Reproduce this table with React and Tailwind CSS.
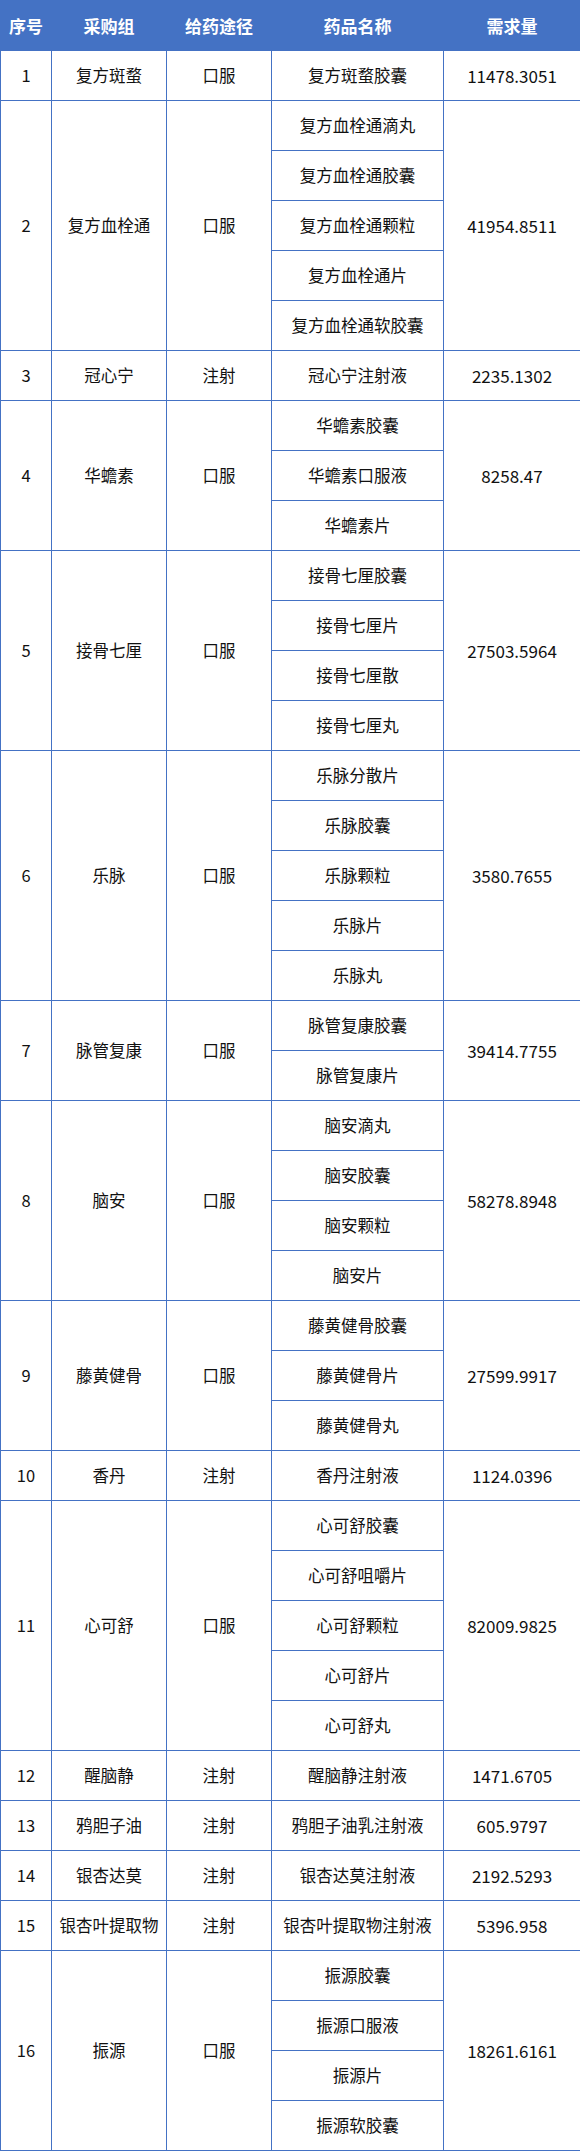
import React from "react";

const rows = [
  { no: 1, group: "复方斑蝥", route: "口服", items: ["复方斑蝥胶囊"], qty: "11478.3051" },
  {
    no: 2,
    group: "复方血栓通",
    route: "口服",
    items: ["复方血栓通滴丸", "复方血栓通胶囊", "复方血栓通颗粒", "复方血栓通片", "复方血栓通软胶囊"],
    qty: "41954.8511",
  },
  { no: 3, group: "冠心宁", route: "注射", items: ["冠心宁注射液"], qty: "2235.1302" },
  { no: 4, group: "华蟾素", route: "口服", items: ["华蟾素胶囊", "华蟾素口服液", "华蟾素片"], qty: "8258.47" },
  {
    no: 5,
    group: "接骨七厘",
    route: "口服",
    items: ["接骨七厘胶囊", "接骨七厘片", "接骨七厘散", "接骨七厘丸"],
    qty: "27503.5964",
  },
  {
    no: 6,
    group: "乐脉",
    route: "口服",
    items: ["乐脉分散片", "乐脉胶囊", "乐脉颗粒", "乐脉片", "乐脉丸"],
    qty: "3580.7655",
  },
  { no: 7, group: "脉管复康", route: "口服", items: ["脉管复康胶囊", "脉管复康片"], qty: "39414.7755" },
  {
    no: 8,
    group: "脑安",
    route: "口服",
    items: ["脑安滴丸", "脑安胶囊", "脑安颗粒", "脑安片"],
    qty: "58278.8948",
  },
  {
    no: 9,
    group: "藤黄健骨",
    route: "口服",
    items: ["藤黄健骨胶囊", "藤黄健骨片", "藤黄健骨丸"],
    qty: "27599.9917",
  },
  { no: 10, group: "香丹", route: "注射", items: ["香丹注射液"], qty: "1124.0396" },
  {
    no: 11,
    group: "心可舒",
    route: "口服",
    items: ["心可舒胶囊", "心可舒咀嚼片", "心可舒颗粒", "心可舒片", "心可舒丸"],
    qty: "82009.9825",
  },
  { no: 12, group: "醒脑静", route: "注射", items: ["醒脑静注射液"], qty: "1471.6705" },
  { no: 13, group: "鸦胆子油", route: "注射", items: ["鸦胆子油乳注射液"], qty: "605.9797" },
  { no: 14, group: "银杏达莫", route: "注射", items: ["银杏达莫注射液"], qty: "2192.5293" },
  { no: 15, group: "银杏叶提取物", route: "注射", items: ["银杏叶提取物注射液"], qty: "5396.958" },
  {
    no: 16,
    group: "振源",
    route: "口服",
    items: ["振源胶囊", "振源口服液", "振源片", "振源软胶囊"],
    qty: "18261.6161",
  },
];

const cell = "border border-[#4472c4] text-center align-middle p-0";

export default function App() {
  return (
    <div
      className="w-[580px] bg-white text-[#111] text-[16.5px]"
      style={{ fontFamily: '"Noto Sans CJK SC", "Noto Sans", sans-serif' }}
    >
      <table className="w-[580px] table-fixed border-collapse">
        <colgroup>
          <col className="w-[51px]" />
          <col className="w-[115px]" />
          <col className="w-[105px]" />
          <col className="w-[172px]" />
          <col className="w-[137px]" />
        </colgroup>
        <thead>
          <tr className="h-[50px] bg-[#4472c4] text-white font-bold text-[17px]">
            <th className={cell}>序号</th>
            <th className={cell}>采购组</th>
            <th className={cell}>给药途径</th>
            <th className={cell}>药品名称</th>
            <th className={cell}>需求量</th>
          </tr>
        </thead>
        <tbody>
          {rows.map((r) =>
            r.items.map((item, i) => (
              <tr key={r.no + "-" + i} className="h-[50px]">
                {i === 0 && (
                  <>
                    <td className={cell} rowSpan={r.items.length}>
                      {r.no}
                    </td>
                    <td className={cell} rowSpan={r.items.length}>
                      {r.group}
                    </td>
                    <td className={cell} rowSpan={r.items.length}>
                      {r.route}
                    </td>
                  </>
                )}
                <td className={cell}>{item}</td>
                {i === 0 && (
                  <td className={cell + " text-[17px]"} rowSpan={r.items.length}>
                    {r.qty}
                  </td>
                )}
              </tr>
            ))
          )}
        </tbody>
      </table>
    </div>
  );
}
